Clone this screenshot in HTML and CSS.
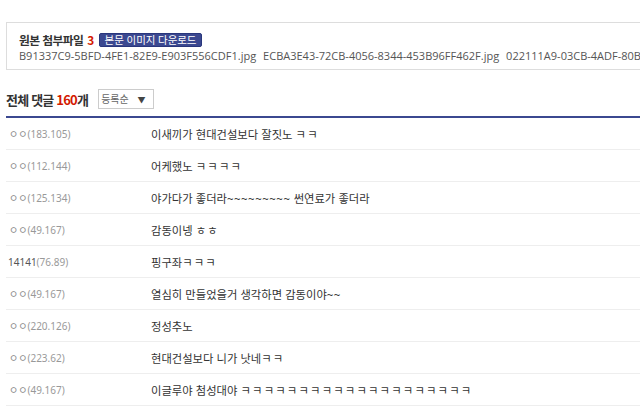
FILE: index.html
```html
<!DOCTYPE html>
<html lang="ko">
<head>
  <meta charset="UTF-8" />
  <meta name="viewport" content="width=device-width, initial-scale=1.0"/>
  <title>댓글</title>
  <link rel="stylesheet" href="styles.css">
</head>
<body>
  <div class="wrap">
    <div class="attach">
      <div class="attach-title">
        원본 첨부파일 <span class="red">3</span>
        <a href="#" class="badge">본문 이미지 다운로드</a>
      </div>
      <ul class="files">
        <li>B91337C9-5BFD-4FE1-82E9-E903F556CDF1.jpg</li>
        <li>ECBA3E43-72CB-4056-8344-453B96FF462F.jpg</li>
        <li>022111A9-03CB-4ADF-80BE-1C2A4F5D7E01.jpg</li>
      </ul>
    </div>

    <div class="cmt-head">
      <span class="cmt-total">전체 댓글 <span class="red">160</span>개</span>
      <div class="sort">등록순 <span class="arrow">▼</span></div>
    </div>

    <ul class="cmt-list">
      <li><span class="nick">ㅇㅇ<span class="ip">(183.105)</span></span><p>이새끼가 현대건설보다 잘짓노 <span class="k">ㅋㅋ</span></p></li>
      <li><span class="nick">ㅇㅇ<span class="ip">(112.144)</span></span><p>어케했노 <span class="k">ㅋㅋㅋㅋ</span></p></li>
      <li><span class="nick">ㅇㅇ<span class="ip">(125.134)</span></span><p>야가다가 좋더라<span class="tilde">~~~~~~~~~</span> 썬연료가 좋더라</p></li>
      <li><span class="nick">ㅇㅇ<span class="ip">(49.167)</span></span><p>감동이넹 <span class="k">ㅎㅎ</span></p></li>
      <li><span class="nick num">14141<span class="ip">(76.89)</span></span><p>핑구좌<span class="k">ㅋㅋㅋ</span></p></li>
      <li><span class="nick">ㅇㅇ<span class="ip">(49.167)</span></span><p>열심히 만들었을거 생각하면 감동이야<span class="tilde">~~</span></p></li>
      <li><span class="nick">ㅇㅇ<span class="ip">(220.126)</span></span><p>정성추노</p></li>
      <li><span class="nick">ㅇㅇ<span class="ip">(223.62)</span></span><p>현대건설보다 니가 낫네<span class="k">ㅋㅋ</span></p></li>
      <li><span class="nick">ㅇㅇ<span class="ip">(49.167)</span></span><p>이글루야 첨성대야 <span class="k">ㅋㅋㅋㅋㅋㅋㅋㅋㅋㅋㅋㅋㅋㅋㅋㅋㅋㅋㅋㅋ</span></p></li>
    </ul>
  </div>
</body>
</html>
```

FILE: styles.css
```css
body {
  margin: 0;
  overflow: hidden;
  background: #fff;
  font-family: "Noto Sans CJK KR", "Noto Sans", sans-serif;
  color: #333;
}
ul {
  list-style: none; margin: 0; padding: 0;
}
.wrap {
  width: 760px; padding: 22px 0 0 6px;
}
.red {
  color: #d31900;
}

/* attachments */
.attach {
  border: 1px solid #ddd; padding: 9px 12px 5px; white-space: nowrap; overflow: hidden;
}
.attach-title {
  font-size: 11.8px; font-weight: bold; height: 16px; line-height: 16px;
  display: flex; align-items: center; gap: 4px; letter-spacing: -0.6px;
}
.badge {
  display: inline-block; background: #3b4890; border: 1px solid #29367c; color: #fff;
  font-size: 10.5px; font-weight: normal; line-height: 12px; padding: 0 5px; border-radius: 2px;
  text-decoration: none; margin-left: 1px; letter-spacing: -0.1px;
}
.files {
  display: flex; gap: 7px; height: 16px; line-height: 16px;
  font-family: "Open Sans", sans-serif; font-size: 11px; color: #555;
}

/* comment header */
.cmt-head {
  display: flex; align-items: center; margin-top: 19px; margin-bottom: 7px; height: 20px;
}
.cmt-total {
  font-size: 13px; font-weight: bold; letter-spacing: -0.8px;
}
.sort {
  margin-left: 10px; height: 18px; width: 52px; border: 1px solid #ccc; box-sizing: content-box;
  font-size: 10px; color: #666; line-height: 18px; padding-left: 2px;
}
.arrow {
  font-size: 8px; color: #444; margin-left: 6px;
}

/* comment list */
.cmt-list {
  border-top: 2px solid #3b4890;
}
.cmt-list li {
  display: flex; align-items: center; height: 31px; border-bottom: 1px solid #eee;
}
.nick {
  width: 142px; padding-left: 3px; font-size: 10px; color: #888; white-space: nowrap;
}
.nick.num {
  padding-left: 2px; width: 143px; font-family: "Noto Sans", sans-serif; color: #555;
}
.ip {
  font-family: "Noto Sans", sans-serif; color: #999;
}
.cmt-list p {
  margin: 0; font-size: 11.3px; color: #333; white-space: nowrap;
}
.tilde {
  font-family: "Noto Sans", sans-serif; letter-spacing: 0.6px;
}
.k {
  letter-spacing: 1.2px;
}
```
